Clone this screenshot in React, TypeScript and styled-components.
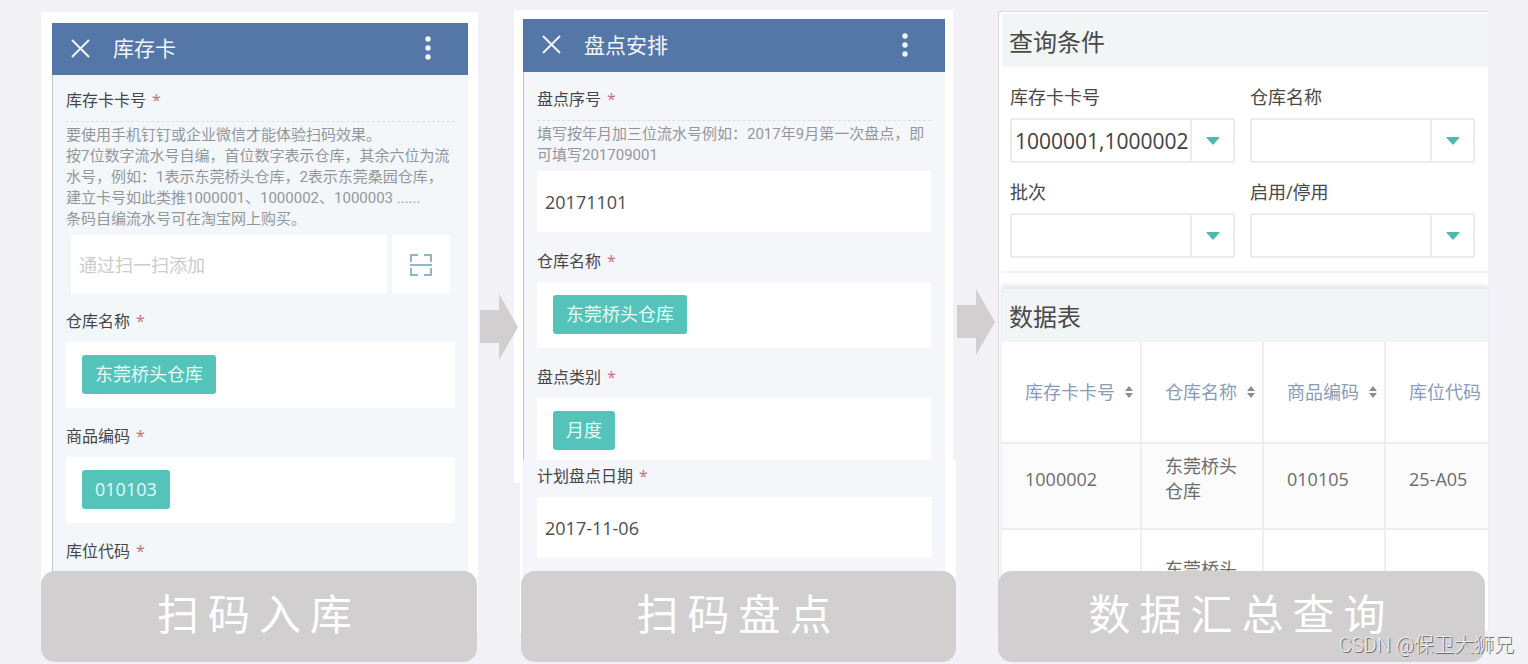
import React from 'react';
import styled, { createGlobalStyle, css } from 'styled-components';

const GlobalStyle = createGlobalStyle`
  *, *::before, *::after { box-sizing: border-box; }
  body {
    margin: 0;
    background: #f2f1f6;
    font-family: 'Open Sans', 'Noto Sans CJK SC', sans-serif;
    color: #444;
  }
  button, input, select { font: inherit; color: inherit; margin: 0; border-radius: 0; }
`;

const Page = styled.main`
  position: relative;
  display: grid;
  grid-template-columns: minmax(0, 437fr) 36px minmax(0, 442fr) 42px minmax(0, 490fr);
  padding: 10px 40px 2px 41px;
  overflow: hidden;
`;

const Column = styled.section<{ $top?: number }>`
  display: flex;
  flex-direction: column;
  padding-top: ${({ $top = 0 }) => $top}px;
`;

const Caption = styled.h2<{ $left?: number; $right?: number }>`
  position: relative;
  z-index: 1;
  margin: -62px ${({ $right = 0 }) => $right}px 0 ${({ $left = 0 }) => $left}px;
  height: 91px;
  border-radius: 14px;
  background: #d1cfd0;
  color: #fff;
  font-family: 'Noto Sans CJK SC', sans-serif;
  font-size: 42px;
  font-weight: 400;
  line-height: 82px;
  letter-spacing: 9px;
  text-align: center;
  white-space: nowrap;
`;

const ArrowSvg = styled.svg<{ $top: number; $left: number }>`
  position: relative;
  z-index: 1;
  width: 38px;
  height: 66px;
  margin: ${({ $top }) => $top}px 0 0 ${({ $left }) => $left}px;
`;

/* Phone screens */

const Frame = styled.div<{ $padding: string; $margin?: string }>`
  padding: ${({ $padding }) => $padding};
  margin: ${({ $margin = '0' }) => $margin};
  background: #fff;
`;

const TitleBar = styled.header<{ $height: number }>`
  display: flex;
  align-items: center;
  height: ${({ $height }) => $height}px;
  padding: 0 35px 2px 19px;
  background: #5577a7;
  color: #f2f5f8;
`;

const BarButton = styled.button`
  display: flex;
  padding: 0;
  border: 0;
  background: none;
`;

const BarTitle = styled.h1`
  flex: 1;
  margin: 0 0 0 23px;
  font-size: 21px;
  font-weight: 400;
  line-height: 30px;
`;

const FormBody = styled.div<{ $edge?: boolean; $padding: string; $tone: string }>`
  padding: ${({ $padding }) => $padding};
  background: ${({ $tone }) => $tone};
  border-left: 1px solid ${({ $edge }) => ($edge ? '#c3c5ca' : '#f0f2f5')};
`;

const labelText = css`
  display: block;
  margin: 0;
  font-size: 16px;
  line-height: 24px;
  color: #454648;
`;

const Label = styled.label`
  ${labelText}
`;

const FieldTitle = styled.p`
  ${labelText}
`;

const Required = styled.span`
  margin-left: 6px;
  color: #d0697a;
`;

const Hint = styled.p`
  margin: 9px 0 5px;
  padding-top: 3px;
  border-top: 1px dashed #dcdfe0;
  font-family: Roboto, 'Noto Sans CJK SC', sans-serif;
  font-size: 15px;
  line-height: 21px;
  color: #92979c;
`;

const Field = styled.div<{ $space: number }>`
  margin-top: ${({ $space }) => $space}px;
`;

const TagBox = styled.div<{ $cut?: boolean }>`
  display: flex;
  margin-top: 9px;
  padding: 13px 16px ${({ $cut }) => ($cut ? 10 : 14)}px;
  background: #fff;
`;

const Tag = styled.output`
  padding: 0 13px;
  border-radius: 3px;
  background: #54c3b9;
  color: #e6fbf8;
  font-size: 18px;
  line-height: 39px;
`;

const TextInput = styled.input`
  display: block;
  width: 100%;
  min-width: 0;
  height: 61px;
  padding: 0 8px;
  border: 0;
  background: #fff;
  font-size: 18px;
  color: #4d4d4d;
  &::placeholder { color: #c9cccc; opacity: 1; }
`;

const SpacedInput = styled(TextInput)`
  margin-top: 9px;
`;

const ScanRow = styled.div`
  display: grid;
  grid-template-columns: minmax(0, 1fr) 58px;
  gap: 5px;
  margin: 0 5px;
  ${TextInput} { height: 59px; }
`;

const ScanButton = styled.button`
  display: flex;
  align-items: center;
  justify-content: center;
  padding: 0;
  border: 0;
  background: #fff;
`;

/* Report */

const Report = styled.div`
  padding: 2px 0 0 3px;
  border-top: 1px solid #d9dada;
  border-left: 1px solid #d9dade;
  background: #fff;
`;

const SectionTitle = styled.h3`
  margin: 0;
  padding: 2px 7px 0;
  background: #f1f5f6;
  color: #484a49;
  font-size: 24px;
  font-weight: 400;
  line-height: 51px;
`;

const QueryCard = styled.section`
  border-bottom: 2px solid #f1f2f3;
`;

const QueryForm = styled.form`
  display: grid;
  grid-template-columns: repeat(2, minmax(0, 1fr));
  gap: 16px 15px;
  padding: 17px 13px 13px 8px;
`;

const QueryLabel = styled.label`
  display: block;
  margin-bottom: 7px;
  font-size: 18px;
  line-height: 27px;
  color: #484848;
`;

const SelectShell = styled.div`
  display: grid;
  grid-template-columns: minmax(0, 1fr) 43px;
  height: 45px;
  border: 2px solid #ebecec;
  border-radius: 2px;
`;

const Select = styled.select`
  grid-area: 1 / 1 / 2 / 3;
  width: 100%;
  padding: 0 43px 0 3px;
  border: 0;
  appearance: none;
  background: #fff;
  font-size: 21px;
  color: #404040;
`;

const CaretCell = styled.span`
  grid-area: 1 / 2 / 2 / 3;
  display: flex;
  align-items: center;
  justify-content: center;
  border-left: 2px solid #ebecec;
  pointer-events: none;
`;

const DataCard = styled.section`
  margin-top: 14px;
  border-top: 2px solid #e9ebf1;
  box-shadow: -1px -2px 4px #e6e8f0;
`;

const Table = styled.table`
  width: 100%;
  table-layout: fixed;
  border-collapse: separate;
  border-spacing: 0;
  font-size: 18px;
  line-height: 25px;
`;

const cell = css`
  padding: 10px 0 24px 23px;
  border-right: 2px solid #eeeeee;
  border-bottom: 2px solid #eeeeee;
  text-align: left;
  vertical-align: middle;
  white-space: nowrap;
  &:last-child { border-right: 0; }
`;

const HeadCell = styled.th<{ $width?: number }>`
  ${cell}
  width: ${({ $width }) => ($width ? `${$width}px` : 'auto')};
  height: 102px;
  padding-top: 0;
  padding-bottom: 0;
  font-weight: 400;
  color: #8a9bb8;
`;

const HeadContent = styled.span`
  display: flex;
  align-items: center;
  gap: 10px;
`;

const Row = styled.tr<{ $striped?: boolean; $tall?: boolean }>`
  background: ${({ $striped }) => ($striped ? '#fbfbfb' : '#fff')};
  ${({ $tall }) => $tall && css`td { padding-top: 27px; padding-bottom: 49px; }`}
`;

const Cell = styled.td`
  ${cell}
  color: #6c6c6c;
`;

const Watermark = styled.p`
  position: absolute;
  right: 14px;
  bottom: 4px;
  z-index: 2;
  margin: 0;
  font-family: Roboto, 'Noto Sans CJK SC', sans-serif;
  font-size: 20px;
  font-weight: 300;
  line-height: 30px;
  color: #ececec;
  text-shadow: 1px 1px 0 #6c6c6e;
`;

const Arrow = ({ top, left }: { top: number; left: number }) => (
  <ArrowSvg $top={top} $left={left} viewBox="0 0 38 66" aria-hidden="true">
    <path d="M0 16H19V0L38 33L19 66V49H0Z" fill="#d1cfd0" />
  </ArrowSvg>
);

const PhoneBar = ({ title, height }: { title: string; height: number }) => (
  <TitleBar $height={height}>
    <BarButton type="button" aria-label="关闭">
      <svg width="19" height="19" viewBox="0 0 19 19" fill="none" stroke="currentColor" strokeWidth="2">
        <path d="M1 1L18 18M18 1L1 18" />
      </svg>
    </BarButton>
    <BarTitle>{title}</BarTitle>
    <BarButton type="button" aria-label="更多">
      <svg width="10" height="24" viewBox="0 0 10 24" fill="currentColor">
        <circle cx="5" cy="3" r="2.7" />
        <circle cx="5" cy="12" r="2.7" />
        <circle cx="5" cy="21" r="2.7" />
      </svg>
    </BarButton>
  </TitleBar>
);

const RequiredLabel = ({ id, text }: { id: string; text: string }) => (
  <Label htmlFor={id}>
    {text}
    <Required>*</Required>
  </Label>
);

const TagField = ({ id, label, value, space, cut }: {
  id: string; label: string; value: string; space: number; cut?: boolean;
}) => (
  <Field $space={space}>
    <RequiredLabel id={id} text={label} />
    <TagBox $cut={cut}>
      <Tag id={id}>{value}</Tag>
    </TagBox>
  </Field>
);

const QueryField = ({ id, label, value = '' }: { id: string; label: string; value?: string }) => (
  <div>
    <QueryLabel htmlFor={id}>{label}</QueryLabel>
    <SelectShell>
      <Select id={id} defaultValue={value}>
        <option value={value}>{value}</option>
      </Select>
      <CaretCell>
        <svg width="14" height="8" viewBox="0 0 14 8" aria-hidden="true">
          <path d="M0 0H14L8 7Q7 8 6 7Z" fill="#4db8ab" />
        </svg>
      </CaretCell>
    </SelectShell>
  </div>
);

const SortIcon = () => (
  <svg width="8" height="12" viewBox="0 0 8 12" fill="#8c8c8c" aria-hidden="true">
    <path d="M4 0L8 5H0ZM0 7H8L4 12Z" />
  </svg>
);

const columns = [
  { name: '库存卡卡号', width: 140, sortable: true },
  { name: '仓库名称', width: 122, sortable: true },
  { name: '商品编码', width: 122, sortable: true },
  { name: '库位代码', sortable: false },
];

export default function App() {
  return (
    <>
      <GlobalStyle />
      <Page>
        <Column $top={2}>
          <Frame $padding="11px 10px 0 11px">
            <PhoneBar title="库存卡" height={52} />
            <FormBody $edge $tone="#f4f7fa" $padding="13px 13px 70px">
              <RequiredLabel id="card" text="库存卡卡号" />
              <Hint>
                要使用手机钉钉或企业微信才能体验扫码效果。<br />
                按7位数字流水号自编，首位数字表示仓库，其余六位为流<br />
                水号，例如：1表示东莞桥头仓库，2表示东莞桑园仓库，<br />
                建立卡号如此类推1000001、1000002、1000003 ......<br />
                条码自编流水号可在淘宝网上购买。
              </Hint>
              <ScanRow>
                <TextInput id="card" placeholder="通过扫一扫添加" />
                <ScanButton type="button" aria-label="扫一扫">
                  <svg width="22" height="22" viewBox="0 0 22 22" fill="none" stroke="#8fb6ca" strokeWidth="2">
                    <path d="M1 8V1H8M14 1H21V8M21 14V21H14M8 21H1V14M0 11H22" />
                  </svg>
                </ScanButton>
              </ScanRow>
              <TagField id="store" label="仓库名称" value="东莞桥头仓库" space={15} />
              <TagField id="goods" label="商品编码" value="010103" space={16} />
              <Field $space={16}>
                <FieldTitle>
                  库位代码
                  <Required>*</Required>
                </FieldTitle>
              </Field>
            </FormBody>
          </Frame>
          <Caption $right={1}>扫码入库</Caption>
        </Column>

        <Arrow top={284} left={2} />

        <Column>
          <Frame $padding="9px 8px 23px 9px" $margin="0 3px 0 0">
            <PhoneBar title="盘点安排" height={53} />
            <FormBody $edge $tone="#f5f6fa" $padding="15px 14px 0 13px">
              <RequiredLabel id="serial" text="盘点序号" />
              <Hint>
                填写按年月加三位流水号例如：2017年9月第一次盘点，即<br />
                可填写201709001
              </Hint>
              <TextInput id="serial" defaultValue="20171101" />
              <TagField id="depot" label="仓库名称" value="东莞桥头仓库" space={17} />
              <TagField id="kind" label="盘点类别" value="月度" space={17} cut />
            </FormBody>
          </Frame>
          <Frame $padding="0 11px 0 3px" $margin="-23px 0 0 6px">
            <FormBody $tone="#f4f6f9" $padding="4px 13px 75px">
              <RequiredLabel id="date" text="计划盘点日期" />
              <SpacedInput id="date" defaultValue="2017-11-06" />
            </FormBody>
          </Frame>
          <Caption $left={7}>扫码盘点</Caption>
        </Column>

        <Arrow top={279} left={1} />

        <Column $top={1}>
          <Report>
            <QueryCard>
              <SectionTitle>查询条件</SectionTitle>
              <QueryForm>
                <QueryField id="q-card" label="库存卡卡号" value="1000001,1000002" />
                <QueryField id="q-store" label="仓库名称" />
                <QueryField id="q-batch" label="批次" />
                <QueryField id="q-state" label="启用/停用" />
              </QueryForm>
            </QueryCard>
            <DataCard>
              <SectionTitle>数据表</SectionTitle>
              <Table>
                <thead>
                  <tr>
                    {columns.map((c) => (
                      <HeadCell key={c.name} $width={c.width} scope="col">
                        <HeadContent>
                          {c.name}
                          {c.sortable && <SortIcon />}
                        </HeadContent>
                      </HeadCell>
                    ))}
                  </tr>
                </thead>
                <tbody>
                  <Row $striped>
                    <Cell>1000002</Cell>
                    <Cell>东莞桥头<br />仓库</Cell>
                    <Cell>010105</Cell>
                    <Cell>25-A05</Cell>
                  </Row>
                  <Row $tall>
                    <Cell />
                    <Cell>东莞桥头</Cell>
                    <Cell />
                    <Cell />
                  </Row>
                </tbody>
              </Table>
            </DataCard>
          </Report>
          <Caption $right={3}>数据汇总查询</Caption>
        </Column>
        <Watermark>CSDN @保卫大狮兄</Watermark>
      </Page>
    </>
  );
}
